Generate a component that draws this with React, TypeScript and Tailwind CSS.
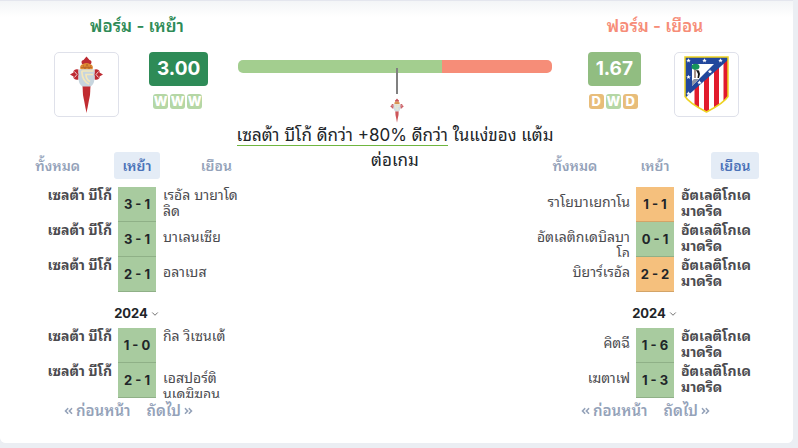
import React from "react";
import { ChevronDown } from "lucide-react";
import { FaAngleDoubleLeft, FaAngleDoubleRight } from "react-icons/fa";

type Tone = "win" | "draw";

interface Match {
  home: string;
  score: string;
  away: string;
  tone: Tone;
  low?: boolean;
}

const toneClass: Record<Tone, string> = {
  win: "bg-[#a8cb9f] border-[#8fb087]",
  draw: "bg-[#f5c07d] border-[#d3a468]",
};

const CELTA = "เซลต้า บีโก้";
const ATLETICO = "อัตเลติโกเด\nมาดริด";

const homeRecent: Match[] = [
  { home: CELTA, score: "3 - 1", away: "เรอัล บายาโด\nลิด", tone: "win" },
  { home: CELTA, score: "3 - 1", away: "บาเลนเซีย", tone: "win", low: true },
  { home: CELTA, score: "2 - 1", away: "อลาเบส", tone: "win", low: true },
];
const homeOlder: Match[] = [
  { home: CELTA, score: "1 - 0", away: "กิล วิเซนเต้", tone: "win" },
  { home: CELTA, score: "2 - 1", away: "เอสปอร์ติ\nนเดฆิฆอน", tone: "win", low: true },
];
const awayRecent: Match[] = [
  { home: "ราโยบาเยกาโน", score: "1 - 1", away: ATLETICO, tone: "draw", low: true },
  { home: "อัตเลติกเดบิลบา\nโอ", score: "0 - 1", away: ATLETICO, tone: "win", low: true },
  { home: "บิยาร์เรอัล", score: "2 - 2", away: ATLETICO, tone: "draw", low: true },
];
const awayOlder: Match[] = [
  { home: "คิตฉี", score: "1 - 6", away: ATLETICO, tone: "win", low: true },
  { home: "เฆตาเฟ", score: "1 - 3", away: ATLETICO, tone: "win", low: true },
];

function CeltaCrest({ className }: { className: string }) {
  return (
    <svg viewBox="0 0 33 57" className={className} role="img" aria-label="เซลต้า บีโก้">
      <path d="M12 8 Q10.500 4.500 13.500 4 L16.500 0.500 L19.500 4 Q22.500 4.500 21 8Z" fill="#bd2a32" />
      <path d="M0 18.500 L3.500 16.500 V15 Q5 12.500 8.500 13.500 V17.500 H10 V19.500 H8.500 V23.500 Q5 24.500 3.500 22 V20.500Z M33 18.500 L29.500 16.500 V15 Q28 12.500 24.500 13.500 V17.500 H23 V19.500 H24.500 V23.500 Q28 24.500 29.500 22 V20.500Z" fill="#bd2a32" />
      <path d="M4.500 15.500L7 18.500L4.500 21.500M28.500 15.500L26 18.500L28.500 21.500" stroke="#eccfd1" strokeWidth="1" fill="none" />
      <path d="M12.500 30 H20.500 L20 39 L16.500 57 L13 39Z" fill="#c12c31" />
      <path d="M10.500 13.500 Q9 9 13 8 Q16.500 6 20 8 Q24 9 22.500 13.500Z" fill="#de8b32" />
      <path d="M11 11.500H22M13 9L15 13L17 8L19 13L21 9" stroke="#b9642a" strokeWidth=".8" fill="none" />
      <path d="M8.500 13.500 H24.500 V23 Q24 28.500 20.500 30.500 H12.500 Q9 28.500 8.500 23Z" fill="#c7d5de" />
      <path d="M23.500 15H13 Q11.500 15 12 17 Q12.500 25 19 28M23 18.500H16 Q16 23.500 20 25.500" stroke="#f4e7ba" strokeWidth="1.700" fill="none" />
    </svg>
  );
}

function Star({ x, y }: { x: number; y: number }) {
  return (
    <path
      transform={`translate(${x} ${y})`}
      d="M0 -2.200 L.6 -.7 L2.200 -.6 L1 .4 L1.400 2 L0 1.100 L-1.400 2 L-1 .4 L-2.200 -.6 L-.6 -.7Z"
      fill="#fff"
    />
  );
}

function AtleticoCrest({ className }: { className: string }) {
  return (
    <svg viewBox="0 0 45 57" className={className} role="img" aria-label="อัตเลติโกเด มาดริด">
      <defs>
        <clipPath id="atm-shield">
          <path d="M1 1H44V40.500Q40 47 22.500 56Q5 47 1 40.500Z" />
        </clipPath>
      </defs>
      <g clipPath="url(#atm-shield)">
        <path d="M0 0H45V57H0Z" fill="#fff" />
        <path d="M10.500 0H15V57H10.500ZM20 0H25V57H20ZM30 0H35V57H30ZM39.500 0H45V57H39.500Z" fill="#e11b2c" />
        <path d="M0 0H45V3L1 42H0Z" fill="#21479c" />
        <path d="M8 8H30L8 30Z" fill="#fff" />
        <path d="M10 23H15L8 30V25Z" fill="#8d95a5" />
        <path d="M11 13V22" stroke="#6d4b3b" strokeWidth="1.200" />
        <ellipse cx="11.500" cy="10.800" rx="4" ry="3" fill="#16945a" />
        <path d="M12 14L15 14.500L16 18L15 22H13.500L14 18Z" fill="#171717" />
        <Star x={4.500} y={4.500} />
        <Star x={20.500} y={4.500} />
        <Star x={36.500} y={4.500} />
        <Star x={26} y={15.500} />
        <Star x={15.500} y={26.500} />
        <Star x={4.500} y={21} />
        <Star x={4.500} y={37.500} />
      </g>
      <path d="M1 1H44V40.500Q40 47 22.500 56Q5 47 1 40.500Z" fill="none" stroke="#eed322" strokeWidth="1.500" />
    </svg>
  );
}

function CrestBox({ children }: { children: React.ReactNode }) {
  return (
    <div className="flex h-[65px] w-[65px] items-center justify-center rounded-[5px] border border-[#dfe1ea] bg-white">
      {children}
    </div>
  );
}

function Points({ value, box, results }: { value: string; box: string; results: string }) {
  return (
    <div className="flex flex-col items-center gap-2">
      <div className={`flex h-[34px] items-center rounded px-2 text-[19px] font-bold text-white ${box}`}>{value}</div>
      <ul className="flex gap-[2px] pr-[2px]">
        {results.split("").map((r, i) => (
          <li
            key={i}
            className={`flex h-[15px] w-[15px] items-center justify-center rounded-[3px] text-[13px] font-extrabold text-white ${
              r === "W" ? "bg-[#b5d7a5]" : "bg-[#e8bd7a]"
            }`}
          >
            {r}
          </li>
        ))}
      </ul>
    </div>
  );
}

function Tabs({ active }: { active: string }) {
  return (
    <div role="tablist" className="-mx-5 grid grid-cols-3 justify-items-center">
      {["ทั้งหมด", "เหย้า", "เยือน"].map((label) => (
        <button
          key={label}
          type="button"
          role="tab"
          aria-selected={label === active}
          className={`h-[27px] rounded-[3px] px-2 text-sm font-semibold ${
            label === active ? "bg-[#e4ecf6] text-[#4a72b8]" : "text-[#94a2b9]"
          }`}
        >
          {label}
        </button>
      ))}
    </div>
  );
}

function MatchTable({ rows, side }: { rows: Match[]; side: "home" | "away" }) {
  const pad = (m: Match) => (m.low ? "pt-[7px]" : "");
  return (
    <div className="-mx-5">
      <table className="w-full table-fixed border-collapse text-sm leading-4 text-[#4b4b4f]">
        <tbody>
          {rows.map((m, i) => (
            <tr key={i}>
              <td className="p-0">
                <div
                  className={`h-[35px] overflow-hidden pr-[6px] text-right whitespace-pre ${
                    side === "home" ? "font-bold" : pad(m)
                  }`}
                >
                  {m.home}
                </div>
              </td>
              <td className="w-[38px] p-0">
                <div
                  className={`flex h-[35px] items-center justify-center border-b text-[13px] font-bold text-[#212529] ${toneClass[m.tone]}`}
                >
                  {m.score}
                </div>
              </td>
              <td className="p-0">
                <div
                  className={`h-[35px] overflow-hidden pl-[7px] whitespace-pre ${
                    side === "away" ? "font-bold" : pad(m)
                  }`}
                >
                  {m.away}
                </div>
              </td>
            </tr>
          ))}
        </tbody>
      </table>
    </div>
  );
}

function FormColumn(props: {
  side: "home" | "away";
  title: string;
  titleClass: string;
  active: string;
  recent: Match[];
  older: Match[];
  children: React.ReactNode;
}) {
  const { side, title, titleClass, active, recent, older, children } = props;
  return (
    <section className="flex flex-col">
      <h2 className={`text-center text-[17px] leading-6 font-semibold ${titleClass}`}>{title}</h2>
      <div className="mt-[14px] mb-[35px]">{children}</div>
      <Tabs active={active} />
      <div className="mt-2">
        <MatchTable rows={recent} side={side} />
      </div>
      <button
        type="button"
        className="flex h-9 items-center justify-center gap-[2px] pt-2 text-[13px] font-bold text-[#212529]"
      >
        2024
        <ChevronDown className="h-[10px] w-[10px] text-[#555]" />
      </button>
      <MatchTable rows={older} side={side} />
      <nav className="flex h-[26px] items-center gap-4 pl-[26px] text-[15px] font-semibold text-[#94a2b9]">
        <button type="button" className="flex items-center gap-[3px] whitespace-nowrap">
          <FaAngleDoubleLeft className="h-3 w-[9px]" />
          ก่อนหน้า
        </button>
        <button type="button" className="flex items-center gap-[3px] whitespace-nowrap">
          ถัดไป
          <FaAngleDoubleRight className="h-3 w-[9px]" />
        </button>
      </nav>
    </section>
  );
}

export default function App() {
  return (
    <div className="bg-[#ebeef3] pr-[5px] pb-[5px] font-['Inter','Noto_Sans_Thai_Looped','Noto_Sans_Thai',sans-serif]">
      <main className="rounded-b-md border-t border-[#e4e6ee] bg-white bg-linear-to-b from-[#f3f5f7] to-white to-[16px] px-[38px] pt-[13px] pb-[19px]">
        <div className="grid grid-cols-[198px_minmax(0,1fr)_200px]">
          <FormColumn
            side="home"
            title="ฟอร์ม - เหย้า"
            titleClass="text-[#2e8b57]"
            active="เหย้า"
            recent={homeRecent}
            older={homeOlder}
          >
            <div className="flex gap-[30px] pl-4">
              <CrestBox>
                <CeltaCrest className="h-[57px] w-[33px]" />
              </CrestBox>
              <Points value="3.00" box="bg-[#2e8b57]" results="WWW" />
            </div>
          </FormColumn>

          <section className="flex flex-col pt-[46px] pr-[3px] pl-[2px]">
            <div className="flex h-[13px] overflow-hidden rounded-[5px]">
              <div className="w-[65%] bg-[#a3ce8f]" />
              <div className="flex-1 bg-[#f68d78]" />
            </div>
            <div className="z-10 -mt-[5px] ml-[3px] flex flex-col items-center gap-1">
              <div className="h-[26px] w-[2px] bg-[#808080]" />
              <CeltaCrest className="h-[25px] w-[14px] opacity-80" />
            </div>
            <p className="-mx-2 text-center text-[17px] leading-[25px] text-[#212529]">
              <span className="border-b border-[#6fb63f] whitespace-nowrap">เซลต้า บีโก้ ดีกว่า +80% ดีกว่า</span>{" "}
              ในแง่ของ แต้ม
              <br />
              ต่อเกม
            </p>
          </section>

          <FormColumn
            side="away"
            title="ฟอร์ม - เยือน"
            titleClass="text-[#f68d78]"
            active="เยือน"
            recent={awayRecent}
            older={awayOlder}
          >
            <div className="flex justify-end gap-[33px] pr-4">
              <Points value="1.67" box="bg-[#91bd81]" results="DWD" />
              <CrestBox>
                <AtleticoCrest className="h-[57px] w-[45px]" />
              </CrestBox>
            </div>
          </FormColumn>
        </div>
      </main>
    </div>
  );
}
